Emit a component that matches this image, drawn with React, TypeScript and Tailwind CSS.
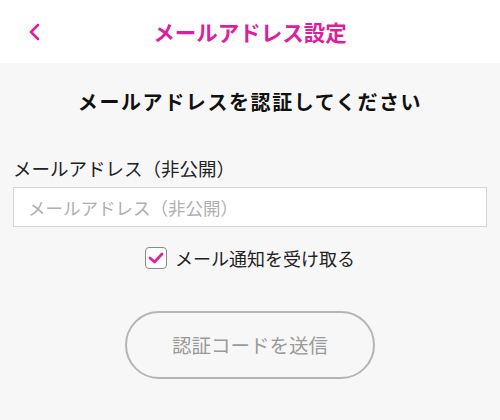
export default function App() {
  return (
    <div className="w-[500px] h-[420px] overflow-hidden bg-[#f7f7f7] font-['Noto_Sans_CJK_JP',sans-serif]">
      <header className="h-[63px] bg-white flex items-center relative">
        <button className="absolute left-[23px] top-[20px] w-[22px] h-[24px] flex items-center justify-center text-[#dd1f9f]">
          <svg width="14" height="18" viewBox="0 0 14 18" fill="none">
            <path d="M11 2 L4 9 L11 16" stroke="currentColor" strokeWidth="2.6" strokeLinecap="round" strokeLinejoin="round" />
          </svg>
        </button>
        <h1 className="w-full text-center text-[21.5px] font-bold text-[#dd1f9f] leading-none pt-[1px]">
          メールアドレス設定
        </h1>
      </header>

      <main className="px-[13px]">
        <h2 className="mt-[27px] text-center text-[20px] font-bold text-[#111] leading-[24px] tracking-[1.6px]">
          メールアドレスを認証してください
        </h2>

        <label className="block mt-[42px] text-[18.5px] text-[#222] leading-[24px]">
          メールアドレス（非公開）
        </label>
        <input
          type="text"
          placeholder="メールアドレス（非公開）"
          className="mt-[7px] w-[474px] h-[40px] bg-white border-[1.5px] border-[#d4d4d4] px-[14px] text-[17.5px] text-[#222] placeholder:text-[#b0b0b0] outline-none"
        />

        <div className="mt-[19px] flex items-center justify-center gap-[8px]">
          <span className="w-[22px] h-[22px] rounded-[4px] border-[1.5px] border-[#8a8a8a] bg-white flex items-center justify-center">
            <svg width="16" height="14" viewBox="0 0 16 14" fill="none">
              <path d="M2 7 L6.5 11 L14 3" stroke="#e0219f" strokeWidth="2.8" strokeLinecap="round" strokeLinejoin="round" />
            </svg>
          </span>
          <span className="text-[18px] text-[#222] leading-[24px]">メール通知を受け取る</span>
        </div>

        <div className="mt-[41px] flex justify-center">
          <button className="w-[250px] h-[68px] rounded-full border-2 border-[#b5b5b5] text-[19.5px] text-[#9a9a9a] bg-[#f7f7f7]">
            認証コードを送信
          </button>
        </div>
      </main>
    </div>
  );
}
